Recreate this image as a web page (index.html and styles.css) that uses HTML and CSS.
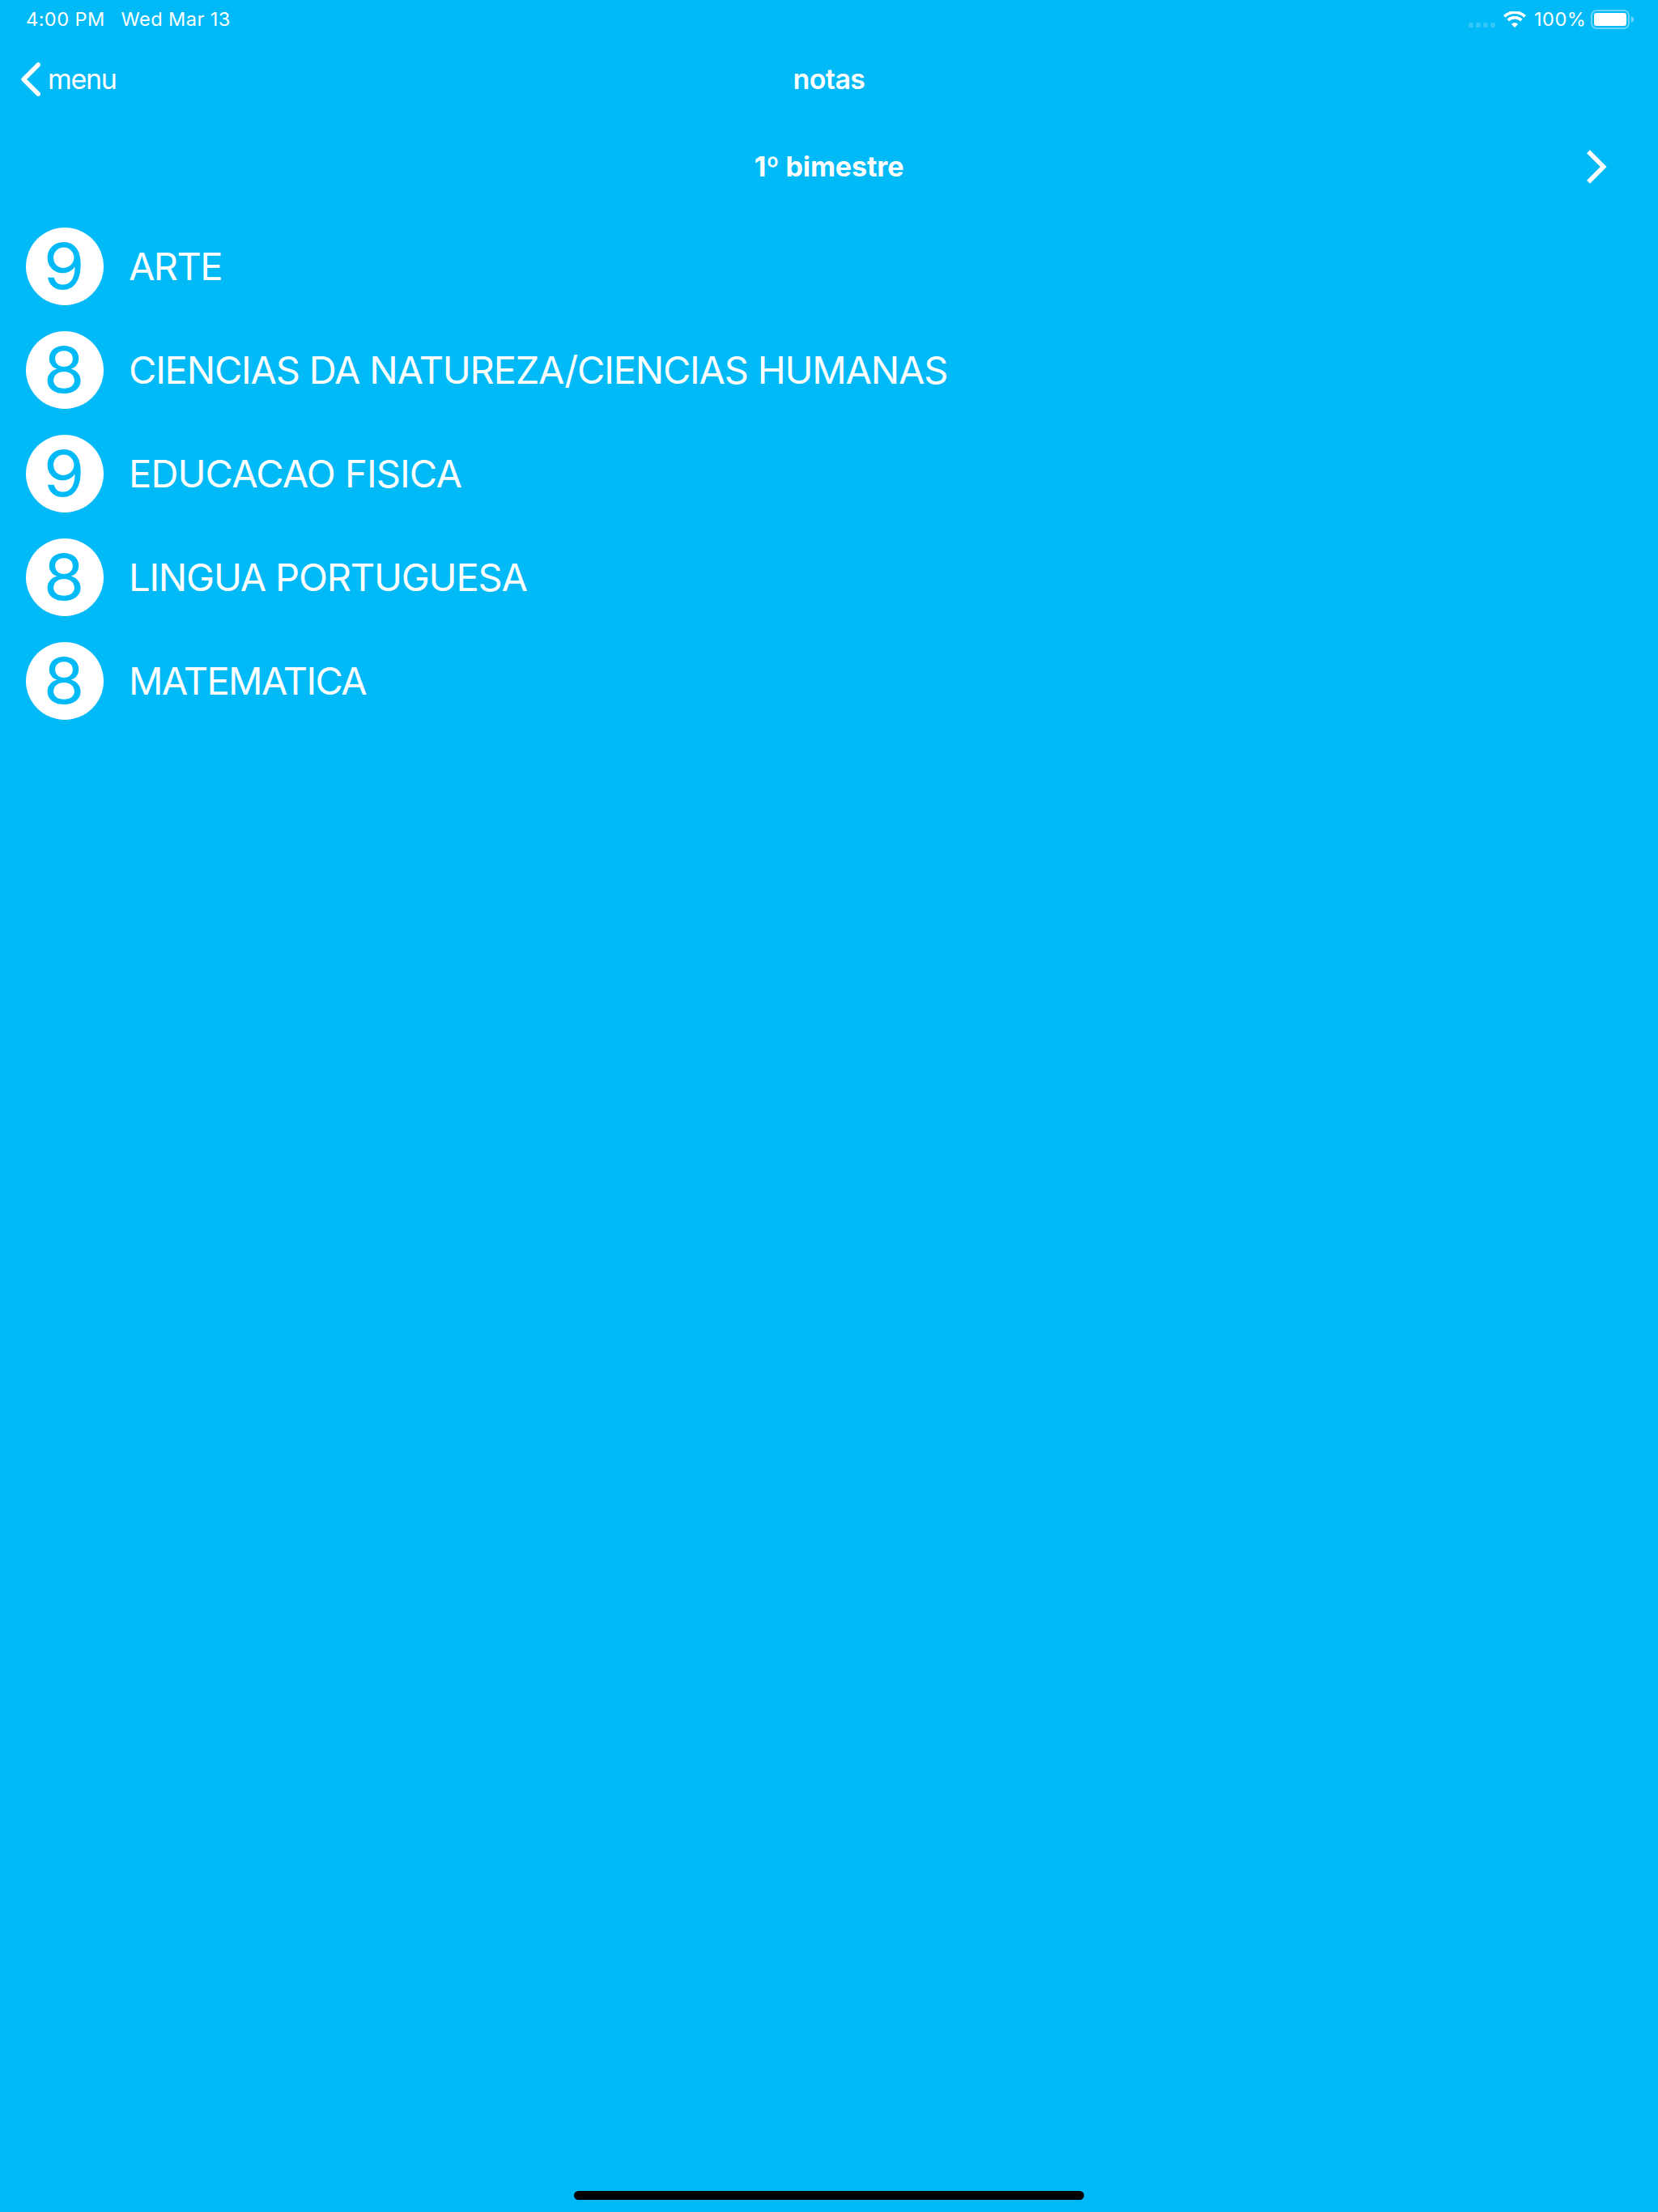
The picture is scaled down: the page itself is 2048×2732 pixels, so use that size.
FILE: index.html
```html
<!DOCTYPE html>
<html lang="pt">
<head>
<meta charset="utf-8">
<title>notas</title>
<link rel="stylesheet" href="styles.css">
</head>
<body>
<header class="status">
  <div class="status-left"><span class="time">4:00 PM</span><span class="date">Wed Mar 13</span></div>
  <div class="status-right">
    <svg class="signal" width="33" height="6" viewBox="0 0 33 6" fill="#fff"><rect width="6" height="6" rx="2"/><rect x="9" width="6" height="6" rx="2"/><rect x="18" width="6" height="6" rx="2"/><rect x="27" width="6" height="6" rx="2"/></svg>
    <svg class="wifi" width="28" height="20" viewBox="0 0 28 20"><path d="M1.300 6.300a18.200 18.200 0 0 1 25.400 0M5.700 11a12 12 0 0 1 16.600 0" fill="none" stroke="#fff" stroke-width="3.700"/><path d="M14 20l-4.200-4.200a6 6 0 0 1 8.400 0z" fill="#fff"/></svg>
    <span class="percent">100%</span>
    <svg class="battery" width="53" height="24" viewBox="0 0 53 24"><rect x="1" y="1" width="46" height="22" rx="6" fill="none" stroke="#fff" stroke-opacity=".4" stroke-width="2"/><rect x="4" y="4" width="40" height="16" rx="3" fill="#fff"/><path d="M50 8c4 1.500 4 6.500 0 8z" fill="#fff" fill-opacity=".45"/></svg>
  </div>
</header>
<nav class="navbar">
  <a class="back"><svg width="26" height="44" viewBox="0 0 26 44"><path d="M23.200 4L5.200 22l18 18" fill="none" stroke="#fff" stroke-width="5.600" stroke-linecap="round" stroke-linejoin="round"/></svg><span class="back-label">menu</span></a>
  <h1 class="title">notas</h1>
</nav>
<section class="period">
  <h2 class="period-name">1º bimestre</h2>
  <svg class="next" width="28" height="44" viewBox="0 0 28 44"><path d="M3 2.300l18.700 18.700L3 39.700" fill="none" stroke="#fff" stroke-width="5.500"/></svg>
</section>
<main class="grades">
  <div class="row"><span class="grade"><span class="digit">9</span></span><span class="subject tight">ARTE</span></div>
  <div class="row"><span class="grade"><span class="digit">8</span></span><span class="subject">CIENCIAS DA NATUREZA/CIENCIAS HUMANAS</span></div>
  <div class="row"><span class="grade"><span class="digit">9</span></span><span class="subject loose">EDUCACAO FISICA</span></div>
  <div class="row"><span class="grade"><span class="digit">8</span></span><span class="subject">LINGUA PORTUGUESA</span></div>
  <div class="row"><span class="grade"><span class="digit">8</span></span><span class="subject tight">MATEMATICA</span></div>
</main>
<footer class="home"><div class="home-bar"></div></footer>
</body>
</html>
```
FILE: styles.css
```css
* { box-sizing: border-box; }
body {
  margin: 0;
  width: 2048px;
  height: 2732px;
  display: flex;
  flex-direction: column;
  background: #00baf8;
  color: #fff;
  font-family: Inter, "Liberation Sans", sans-serif;
  white-space: nowrap;
  overflow: hidden;
}
.status {
  height: 48px;
  display: flex;
  justify-content: space-between;
  padding: 0 30px 0 32px;
  font-size: 23.5px;
  line-height: 48px;
  font-weight: 400;
}
.status-left { display: flex; gap: 20px; }
.time, .date { letter-spacing: 0.45px; }
.status-right { display: flex; }
.signal { margin: 28px 10px 0 0; opacity: .2; }
.wifi { margin: 14px 10px 0 0; }
.percent { width: 70px; letter-spacing: 0.5px; }
.battery { margin-top: 12px; }
.navbar {
  height: 100px;
  display: grid;
  grid-template-columns: 1fr auto 1fr;
  align-items: center;
  padding: 0 24px;
}
.back { display: flex; align-items: center; gap: 9px; }
.back-label { font-size: 34px; font-weight: 400; letter-spacing: -1.3px; padding-bottom: 1px; }
.title { margin: 0; font-size: 34px; font-weight: 600; letter-spacing: -0.6px; padding-bottom: 1px; }
.period {
  height: 117px;
  display: grid;
  grid-template-columns: 1fr auto 1fr;
  align-items: center;
  padding: 0 61px;
}
.period-name { grid-column: 2; margin: 0; font-size: 34px; font-weight: 700; letter-spacing: -0.1px; padding-bottom: 2px; }
.next { justify-self: end; }
.grades { flex: 1; }
.row {
  height: 128px;
  display: flex;
  align-items: center;
  gap: 31px;
  padding-left: 32px;
}
.grade {
  display: flex;
  justify-content: center;
  width: 96px;
  height: 96px;
  padding-right: 2px;
  border-radius: 50%;
  background: #fff;
  color: #00baf8;
  font-size: 78px;
  line-height: 96px;
}
.digit { transform: scaleX(1.05); }
.subject { font-size: 47px; font-weight: 400; letter-spacing: -1.18px; padding-bottom: 1px; }
.subject.loose { letter-spacing: -0.85px; }
.subject.tight { letter-spacing: -1.6px; }
.home { height: 26px; display: flex; justify-content: center; }
.home-bar { width: 630px; height: 11px; border-radius: 5.5px; background: #000; }
```
